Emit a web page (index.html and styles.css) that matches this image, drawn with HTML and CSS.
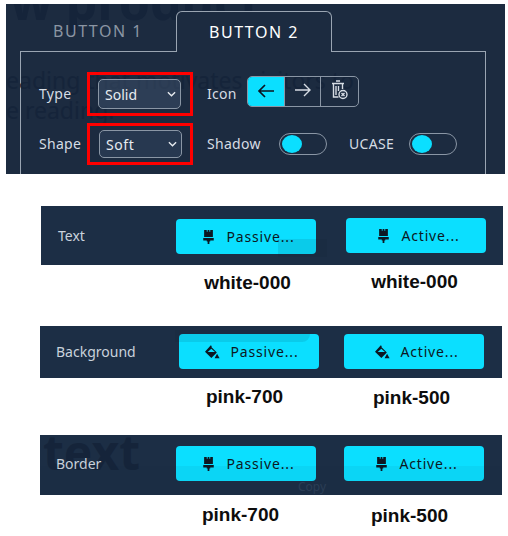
FILE: index.html
```html
<!DOCTYPE html>
<html lang="en">
<head>
    <meta charset="UTF-8">
    <meta name="viewport" content="width=device-width, initial-scale=1.0">
    <title>Button settings</title>
    <link rel="stylesheet" href="styles.css">
</head>
<body>
    <svg class="defs" width="0" height="0">
        <symbol id="brush" viewBox="0 0 12 16">
            <path d="M1 0h3v2h1V0h2v2h1V0h3v8H1z"/>
            <path d="M0 9h12v3H8v1H7v3H5v-3H4v-1H0z"/>
        </symbol>
        <symbol id="drip" viewBox="0 0 18 16">
            <path d="M7 0l1.2 1.2L7.6 2l6.6 6.6L7.6 15.200 0 7.600zM7.600 4L3.200 8h8.800z" fill-rule="evenodd"/>
            <path d="M14.500 10l3 5.500h-6z"/>
        </symbol>
    </svg>

    <section class="panel">
        <div class="ghost ghost-title">w product</div>
        <div class="ghost ghost-copy">eading that motivates visitors to<br>e reading.</div>

        <div class="tabs">
            <div class="tab">BUTTON 1</div>
            <div class="tab tab-active">BUTTON 2</div>
        </div>
        <div class="tab-body">
            <div class="field-row">
                <span class="label label-first">Type</span>
                <div class="marked">
                    <div class="select select-solid">
                        <span>Solid</span>
                        <svg class="chevron" viewBox="0 0 10 6"><path d="M1 1l4 4 4-4"/></svg>
                    </div>
                </div>
                <span class="label label-icon">Icon</span>
                <div class="icon-group">
                    <div class="icon-btn icon-btn-on">
                        <svg width="18" height="14" viewBox="0 0 18 14"><path d="M17 7H2M8 1L2 7l6 6"/></svg>
                    </div>
                    <div class="icon-btn">
                        <svg class="arrow-up" width="18" height="14" viewBox="0 0 18 14"><path d="M1 7h15M10 1l6 6-6 6"/></svg>
                    </div>
                    <div class="icon-btn icon-btn-wide">
                        <svg class="arrow-up" width="17" height="20" viewBox="0 0 17 20">
                            <path d="M5 1h4M1 3.500h12M2.500 3.500V17h5M11.500 3.500V9M5 6v9M7.500 6v5"/>
                            <circle cx="12" cy="14.500" r="4"/>
                            <path d="M10.500 13l3 3M13.500 13l-3 3"/>
                        </svg>
                    </div>
                </div>
            </div>
            <div class="field-row field-row-low">
                <span class="label label-first">Shape</span>
                <div class="marked">
                    <div class="select select-soft">
                        <span>Soft</span>
                        <svg class="chevron" viewBox="0 0 10 6"><path d="M1 1l4 4 4-4"/></svg>
                    </div>
                </div>
                <span class="label label-shadow">Shadow</span>
                <div class="toggle"><span class="knob"></span></div>
                <span class="label label-ucase">UCASE</span>
                <div class="toggle"><span class="knob"></span></div>
            </div>
        </div>
    </section>

    <section class="strip strip-text">
        <span class="strip-label">Text</span>
        <div class="cta cta-a"><svg class="cta-icon"><use href="#brush"/></svg>Passive...</div>
        <div class="cta cta-b"><svg class="cta-icon"><use href="#brush"/></svg>Active...</div>
        <div class="shade shade-text"></div>
    </section>
    <div class="captions captions-text">
        <span>white-000</span>
        <span>white-000</span>
    </div>

    <section class="strip strip-bg">
        <span class="strip-label">Background</span>
        <div class="cta cta-c"><svg class="cta-icon cta-icon-drip"><use href="#drip"/></svg>Passive...</div>
        <div class="cta cta-d"><svg class="cta-icon cta-icon-drip"><use href="#drip"/></svg>Active...</div>
        <div class="shade shade-bg"></div>
    </section>
    <div class="captions captions-bg">
        <span>pink-700</span>
        <span>pink-500</span>
    </div>

    <section class="strip strip-border">
        <div class="ghost ghost-text">text</div>
        <span class="strip-label">Border</span>
        <div class="cta cta-e"><svg class="cta-icon"><use href="#brush"/></svg>Passive...</div>
        <div class="cta cta-f"><svg class="cta-icon"><use href="#brush"/></svg>Active...</div>
        <div class="shade shade-border"></div>
        <div class="ghost ghost-small">Copy</div>
    </section>
    <div class="captions captions-border">
        <span>pink-700</span>
        <span>pink-500</span>
    </div>
</body>
</html>
```

FILE: styles.css
```css
body {
    margin: 0;
    background: #fff;
    font-family: "Noto Sans", sans-serif;
    color: #d6dce4;
    overflow: hidden;
}

.defs {
    position: absolute;
}

.ghost {
    position: absolute;
    color: #15243a;
    white-space: nowrap;
    pointer-events: none;
}

/* top panel */
.panel {
    position: relative;
    width: 499px;
    height: 170px;
    margin: 4px 0 0 6px;
    padding-top: 7px;
    box-sizing: border-box;
    background: #1c2b40;
    overflow: hidden;
}

.ghost-title {
    left: 4px;
    top: -37px;
    font-size: 50px;
    font-weight: 700;
}

.ghost-copy {
    left: 0;
    top: 61px;
    font-size: 23px;
    line-height: 30px;
}

.tabs {
    position: relative;
    display: flex;
    height: 41px;
    margin: 0 0 -1px 14px;
}

.tab {
    width: 156px;
    height: 41px;
    box-sizing: border-box;
    padding-top: 10px;
    text-align: center;
    font-size: 16px;
    line-height: 20px;
    letter-spacing: 1.5px;
    color: #8b95a3;
}

.tab-active {
    border: 1px solid #9aa5b2;
    border-bottom: 0;
    border-radius: 6px 6px 0 0;
    background: #1c2b40;
    color: #fff;
}

.tab-body {
    width: 466px;
    height: 123px;
    margin-left: 14px;
    padding: 20px 0 0 18px;
    box-sizing: border-box;
    border: 1px solid #9aa5b2;
    border-bottom: 0;
}

.field-row {
    position: relative;
    display: flex;
    align-items: center;
    height: 44px;
}

.field-row-low {
    height: 42px;
    margin-top: 7px;
}

.label {
    font-size: 14px;
    line-height: 20px;
    letter-spacing: 0.3px;
}

.label-first {
    width: 48px;
}

.label-icon {
    width: 40px;
    margin-left: 14px;
}

.label-shadow {
    width: 72px;
    margin-left: 14px;
}

.label-ucase {
    width: 60px;
    margin-left: 22px;
}

.marked {
    display: flex;
    align-items: center;
    width: 106px;
    height: 100%;
    padding-left: 8px;
    box-sizing: border-box;
    border: 3px solid #f00;
}

.select {
    display: flex;
    align-items: center;
    justify-content: space-between;
    width: 83px;
    padding: 0 4px 0 6px;
    box-sizing: border-box;
    border: 1px solid #8a96a5;
    border-radius: 5px;
    font-size: 14px;
    color: #e8ecf0;
}

.select-solid {
    height: 30px;
    background: rgba(60, 78, 104, 0.55);
}

.select-soft {
    height: 28px;
    margin-left: 1px;
    background: rgba(50, 68, 92, 0.55);
    letter-spacing: 0.6px;
}

.chevron {
    width: 9px;
    height: 6px;
    fill: none;
    stroke: #e8ecf0;
    stroke-width: 1.5;
}

.icon-group {
    display: flex;
    width: 112px;
    height: 31px;
    margin-bottom: 6px;
    box-sizing: border-box;
    border: 1px solid #8a96a5;
    border-radius: 5px;
    overflow: hidden;
}

.icon-btn {
    display: flex;
    align-items: center;
    justify-content: center;
    width: 35px;
    border-right: 1px solid #8a96a5;
    fill: none;
    stroke: #d6dce4;
    stroke-width: 1.4;
}

.icon-btn-on {
    width: 36px;
    background: #0bdfff;
    stroke: #0c1420;
    stroke-width: 1.7;
}

.icon-btn-wide {
    flex: 1;
    border-right: 0;
}

.arrow-up {
    margin-top: -3px;
}

.toggle {
    display: flex;
    align-items: center;
    width: 48px;
    height: 22px;
    padding-left: 2px;
    box-sizing: border-box;
    border: 1px solid #8a96a5;
    border-radius: 11px;
}

.knob {
    width: 20px;
    height: 18px;
    border-radius: 50%;
    background: #0bdfff;
}

/* preview strips */
.strip {
    position: relative;
    display: flex;
    align-items: flex-start;
    width: 462px;
    background: #1c2e45;
    overflow: hidden;
}

.strip-text {
    height: 59px;
    margin: 32px 0 0 41px;
}

.strip-bg {
    height: 52px;
    margin: 0 0 0 40px;
}

.strip-border {
    height: 60px;
    margin: 0 0 0 40px;
}

.strip-label {
    position: relative;
    width: 119px;
    margin-left: 16px;
    font-size: 14px;
    line-height: 20px;
    color: #c9d2dc;
}

.strip-text .strip-label {
    width: 118px;
    margin: 20px 0 0 17px;
}

.strip-bg .strip-label {
    margin-top: 16px;
}

.strip-border .strip-label {
    margin-top: 19px;
}

.cta {
    position: relative;
    display: flex;
    align-items: center;
    justify-content: center;
    width: 140px;
    height: 35px;
    flex: none;
    padding-left: 6px;
    box-sizing: border-box;
    border-radius: 4px;
    background: #0bdfff;
    color: #0c1722;
    font-size: 14px;
    letter-spacing: 0.85px;
}

.cta-icon {
    width: 11px;
    height: 14px;
    margin-right: 12px;
    fill: #0c1722;
}

.cta-icon-drip {
    width: 15px;
    height: 14px;
    margin-right: 10px;
}

.cta-a {
    margin-top: 13px;
}

.cta-b {
    margin: 12px 0 0 30px;
}

.cta-c {
    margin: 8px 0 0 4px;
}

.cta-d {
    margin: 8px 0 0 25px;
}

.cta-e {
    margin: 11px 0 0 1px;
}

.cta-f {
    margin: 11px 0 0 28px;
}

.shade {
    position: absolute;
    background: rgba(12, 30, 50, 0.1);
}

.shade-text {
    left: 237px;
    top: 33px;
    width: 49px;
    height: 18px;
}

.shade-bg {
    left: 135px;
    top: 4px;
    width: 135px;
    height: 12px;
    border-radius: 0 0 8px 0;
}

.shade-border {
    left: 0;
    top: 31px;
    width: 462px;
    height: 29px;
    background: rgba(12, 30, 50, 0.05);
}

.ghost-text {
    left: 3px;
    top: -16px;
    font-size: 48px;
    font-weight: 700;
}

.ghost-small {
    left: 258px;
    top: 43px;
    font-size: 12px;
    color: #2b3d55;
}

/* values under the strips */
.captions {
    display: flex;
    align-items: flex-start;
    font-family: "Liberation Sans", Arial, sans-serif;
    font-size: 19px;
    font-weight: 700;
    line-height: 22px;
    color: #0d0d0d;
}

.captions span {
    width: 167px;
    text-align: center;
}

.captions-text {
    height: 61px;
    padding: 7px 0 0 164px;
    box-sizing: border-box;
}

.captions-text span:last-child {
    margin-top: -1px;
}

.captions-bg {
    height: 57px;
    padding: 8px 0 0 161px;
    box-sizing: border-box;
}

.captions-bg span:last-child {
    margin-top: 1px;
}

.captions-border {
    padding: 9px 0 0 157px;
}

.captions-border span:last-child {
    margin: 1px 0 0 2px;
}
```
